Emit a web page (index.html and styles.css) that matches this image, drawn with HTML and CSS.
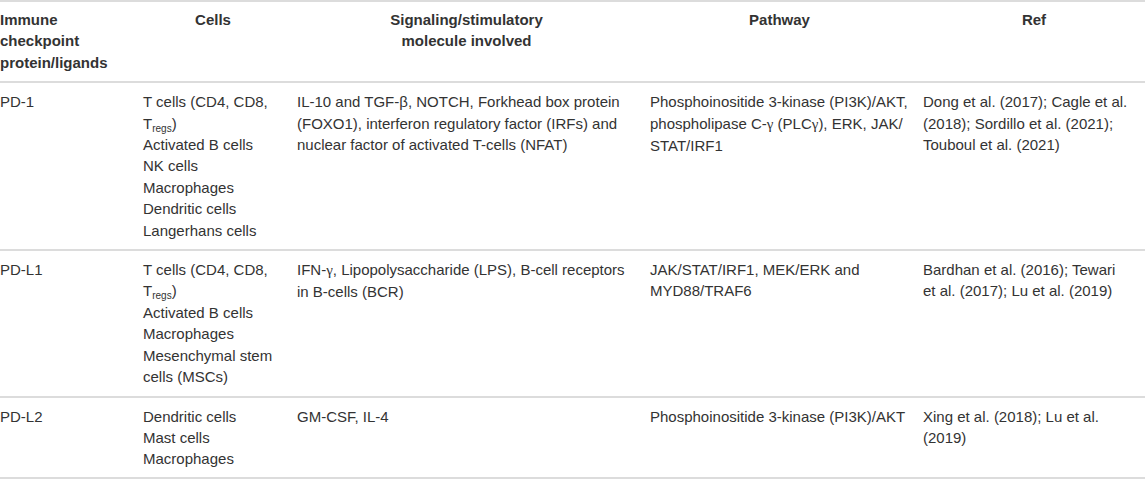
FILE: index.html
```html
<!DOCTYPE html>
<html lang="en">
<head>
<meta charset="utf-8">
<title>Immune checkpoint proteins</title>
<link rel="stylesheet" href="styles.css">
</head>
<body>
<table class="tbl">
  <colgroup>
    <col class="c1"><col class="c2"><col class="c3"><col class="c4"><col class="c5">
  </colgroup>
  <thead>
    <tr>
      <th class="first">Immune checkpoint protein/ligands</th>
      <th>Cells</th>
      <th>Signaling/stimulatory<br>molecule involved</th>
      <th>Pathway</th>
      <th class="last">Ref</th>
    </tr>
  </thead>
  <tbody>
    <tr>
      <td>PD-1</td>
      <td>T cells (CD4, CD8, T<sub>regs</sub>)<br>Activated B cells<br>NK cells<br>Macrophages<br>Dendritic cells<br>Langerhans cells</td>
      <td>IL-10 and TGF-β, NOTCH, Forkhead box protein (FOXO1), interferon regulatory factor (IRFs) and nuclear factor of activated T-cells (NFAT)</td>
      <td>Phosphoinositide 3-kinase (PI3K)/AKT, phospholipase C-<span class="greek">γ</span> (PLC<span class="greek">γ</span>), ERK, JAK/<wbr>STAT/IRF1</td>
      <td>Dong et al. (2017); Cagle et al. (2018); Sordillo et al. (2021); Touboul et al. (2021)</td>
    </tr>
    <tr>
      <td>PD-L1</td>
      <td>T cells (CD4, CD8, T<sub>regs</sub>)<br>Activated B cells<br>Macrophages<br>Mesenchymal stem cells (MSCs)</td>
      <td>IFN-<span class="greek">γ</span>, Lipopolysaccharide (LPS), B-cell receptors in B-cells (BCR)</td>
      <td><span class="nw">JAK/STAT/IRF1,</span> <span class="nw">MEK/ERK</span> and <span class="nw">MYD88/TRAF6</span></td>
      <td>Bardhan et al. (2016); Tewari et al. (2017); Lu et al. (2019)</td>
    </tr>
    <tr class="lastrow">
      <td>PD-L2</td>
      <td>Dendritic cells<br>Mast cells<br>Macrophages</td>
      <td>GM-CSF, IL-4</td>
      <td>Phosphoinositide 3-kinase (PI3K)/AKT</td>
      <td>Xing et al. (2018); Lu et al. (2019)</td>
    </tr>
  </tbody>
</table>
</body>
</html>
```
FILE: styles.css
```css
html, body {
  margin: 0;
  padding: 0;
  background: #ffffff;
}

body {
  font-family: "Liberation Sans", Arial, sans-serif;
  font-size: 15px;
  line-height: 21.4px;
  color: #333333;
}

.tbl {
  width: 1145px;
  table-layout: fixed;
  border-collapse: collapse;
  border-spacing: 0;
}

.c1 { width: 143px; }
.c2 { width: 154px; }
.c3 { width: 353px; }
.c4 { width: 273px; }
.c5 { width: 222px; }

.tbl th,
.tbl td {
  padding: 8px 14px 8px 0;
  vertical-align: top;
  text-align: left;
}

.tbl th {
  font-weight: bold;
  text-align: center;
  border-top: 2px solid #dcdcdc;
  border-bottom: 2px solid #dcdcdc;
  padding-top: 7px;
  padding-bottom: 8px;
}

.tbl th.first {
  text-align: left;
}

.tbl th.last {
  padding-left: 14px;
}

.tbl tbody tr {
  border-bottom: 2px solid #dcdcdc;
}

.tbl .lastrow td {
  padding-bottom: 7px;
}

.tbl sub {
  font-size: 10px;
  line-height: 0;
  vertical-align: -3px;
}

.greek {
  font-family: "Liberation Serif", "Times New Roman", serif;
}

.nw {
  white-space: nowrap;
}
```
